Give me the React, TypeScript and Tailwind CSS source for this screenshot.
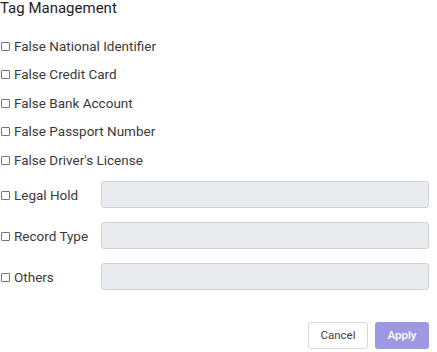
const plainTags = [
  "False National Identifier",
  "False Credit Card",
  "False Bank Account",
  "False Passport Number",
  "False Driver's License",
];

const fieldTags = ["Legal Hold", "Record Type", "Others"];

function Box({ label }: { label: string }) {
  return (
    <label className="flex items-center gap-[4px] text-[13.5px] text-[#3a3a3a]">
      <span className="h-[9px] w-[9px] rounded-[1px] border border-[#767676] bg-white" />
      {label}
    </label>
  );
}

export default function App() {
  return (
    <div
      className="w-[437px] h-[352px] bg-white pr-[8px]"
      style={{ fontFamily: "Roboto, 'Liberation Sans', sans-serif" }}
    >
      <h2 className="text-[15px] leading-[16px] font-normal text-[#1e1e1e]">Tag Management</h2>
      <div className="mt-[22px] flex flex-col gap-[12.5px] pl-[1px]">
        {plainTags.map((tag) => (
          <div key={tag} className="h-[16px] flex items-center">
            <Box label={tag} />
          </div>
        ))}
      </div>
      <div className="mt-[13px] flex flex-col gap-[14px] pl-[1px]">
        {fieldTags.map((tag) => (
          <div key={tag} className="flex items-center">
            <div className="w-[100px] pt-[1px]">
              <Box label={tag} />
            </div>
            <div className="h-[27px] flex-1 rounded-[3px] border border-[#cfd2d6] bg-[#e9ebee]" />
          </div>
        ))}
      </div>
      <div className="mt-[32px] flex justify-end gap-[7px]">
        <button className="h-[27px] w-[60px] rounded-[3px] border border-[#d9d9d9] bg-white text-[11.5px] text-[#444]">
          Cancel
        </button>
        <button className="h-[27px] w-[54px] rounded-[3px] bg-[#9c98e2] text-[11.5px] font-medium text-white">
          Apply
        </button>
      </div>
    </div>
  );
}
